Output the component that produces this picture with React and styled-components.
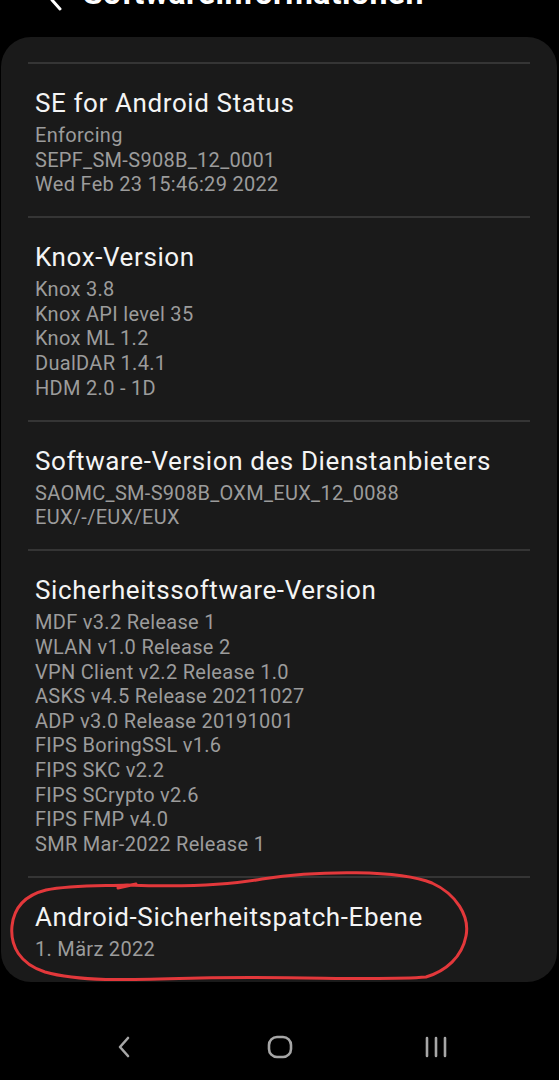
import React from "react";
import styled, { createGlobalStyle } from "styled-components";

const Global = createGlobalStyle`
  html, body { margin: 0; padding: 0; background: #000; }
  body { font-family: Roboto, "Noto Sans", sans-serif; overflow: hidden; }
`;

const Page = styled.div`
  width: 559px;
  height: 1080px;
  background: #000;
  display: flex;
  flex-direction: column;
  overflow: hidden;
`;

const Header = styled.header`
  margin-top: -40px;
  height: 51px;
  display: flex;
  align-items: flex-end;
  gap: 20px;
  padding-left: 49px;
  color: #fff;
`;

const HeaderTitle = styled.h1`
  margin: 0;
  font-size: 32px;
  font-weight: 700;
  line-height: 36px;
  letter-spacing: 0.4px;
`;

const Card = styled.section`
  position: relative;
  margin: 26px 2px 0 1px;
  padding-top: 25px;
  background: #1a1a1a;
  border-radius: 30px;
`;

const Divider = styled.div`
  height: 2px;
  margin: 0 27px;
  background: #353535;
`;

const Item = styled.div`
  position: relative;
  padding: 23px 20px ${(p) => (p.$last ? "21px" : "19.5px")} 34px;
`;

const Title = styled.div`
  font-size: 26px;
  line-height: 32px;
  letter-spacing: 0.6px;
  color: #f4f4f4;
  margin-bottom: 4px;
`;

const Sub = styled.div`
  font-size: 20px;
  line-height: 24.6px;
  letter-spacing: 0.3px;
  color: #9c9c9c;
`;

const Scribble = styled.svg`
  position: absolute;
  left: -1px;
  top: -12px;
  pointer-events: none;
`;

const NavBar = styled.nav`
  margin-top: 43px;
  height: 44px;
  display: flex;
  justify-content: center;
  align-items: center;
  gap: 96px;
`;

const NavButton = styled.div`
  width: 60px;
  height: 44px;
  display: flex;
  align-items: center;
  justify-content: center;
  color: #a6a6a6;
`;

const sections = [
  {
    title: "SE for Android Status",
    lines: ["Enforcing", "SEPF_SM-S908B_12_0001", "Wed Feb 23 15:46:29 2022"],
  },
  {
    title: "Knox-Version",
    lines: ["Knox 3.8", "Knox API level 35", "Knox ML 1.2", "DualDAR 1.4.1", "HDM 2.0 - 1D"],
  },
  {
    title: "Software-Version des Dienstanbieters",
    lines: ["SAOMC_SM-S908B_OXM_EUX_12_0088", "EUX/-/EUX/EUX"],
  },
  {
    title: "Sicherheitssoftware-Version",
    lines: [
      "MDF v3.2 Release 1",
      "WLAN v1.0 Release 2",
      "VPN Client v2.2 Release 1.0",
      "ASKS v4.5 Release 20211027",
      "ADP v3.0 Release 20191001",
      "FIPS BoringSSL v1.6",
      "FIPS SKC v2.2",
      "FIPS SCrypto v2.6",
      "FIPS FMP v4.0",
      "SMR Mar-2022 Release 1",
    ],
  },
  {
    title: "Android-Sicherheitspatch-Ebene",
    lines: ["1. März 2022"],
    marked: true,
  },
];

function Marker() {
  return (
    <Scribble width="480" height="125" viewBox="0 865 480 125">
      <path
        d="M 127 884 C 180 886, 230 884, 262 878 C 320 869, 400 869, 432 882 C 456 893, 470 915, 466 935 C 462 956, 446 970, 426 976 C 380 980, 300 975, 200 977 C 130 979, 80 981, 45 971 C 20 963, 10 945, 12 925 C 14 906, 26 894, 46 889 C 70 884, 100 885, 127 884 M 118 887 L 136 883"
        fill="none"
        stroke="#e3383b"
        strokeWidth="3"
        strokeLinecap="round"
        strokeLinejoin="round"
      />
    </Scribble>
  );
}

export default function App() {
  return (
    <Page>
      <Global />
      <Header>
        <svg width="14" height="22" viewBox="0 0 14 22">
          <path d="M11 2 L3 11 L11 20" fill="none" stroke="#fff" strokeWidth="3" strokeLinecap="round" strokeLinejoin="round" />
        </svg>
        <HeaderTitle>Softwareinformationen</HeaderTitle>
      </Header>
      <Card>
        {sections.map((s) => (
          <React.Fragment key={s.title}>
            <Divider />
            <Item $last={s.marked}>
              {s.marked && <Marker />}
              <Title>{s.title}</Title>
              {s.lines.map((l) => (
                <Sub key={l}>{l}</Sub>
              ))}
            </Item>
          </React.Fragment>
        ))}
      </Card>
      <NavBar>
        <NavButton>
          <svg width="16" height="24" viewBox="0 0 16 24">
            <path d="M12 3 L4 12 L12 21" fill="none" stroke="currentColor" strokeWidth="2.6" strokeLinecap="round" strokeLinejoin="round" />
          </svg>
        </NavButton>
        <NavButton>
          <svg width="26" height="24" viewBox="0 0 26 24">
            <rect x="2" y="2" width="22" height="20" rx="8" fill="none" stroke="currentColor" strokeWidth="2.6" />
          </svg>
        </NavButton>
        <NavButton>
          <svg width="24" height="24" viewBox="0 0 24 24">
            <path d="M3 3 V21 M12 3 V21 M21 3 V21" fill="none" stroke="currentColor" strokeWidth="2.6" strokeLinecap="round" />
          </svg>
        </NavButton>
      </NavBar>
    </Page>
  );
}
